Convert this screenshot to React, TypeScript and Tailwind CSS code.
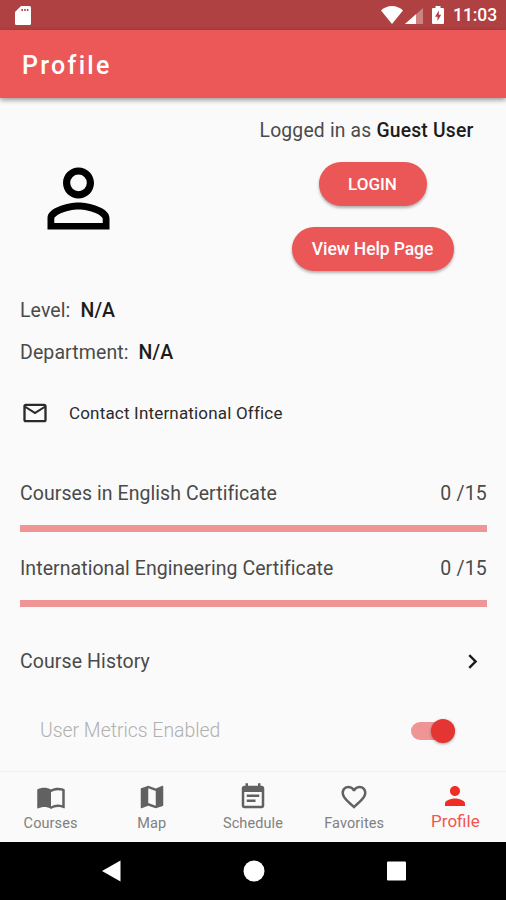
import React from "react";
import clsx from "clsx";

interface IconProps {
  path: string;
  className?: string;
}

const Icon: React.FC<IconProps> = ({ path, className }) => (
  <svg viewBox="0 0 24 24" fill="currentColor" className={clsx("shrink-0", className)}>
    <path d={path} />
  </svg>
);

const personOutline =
  "M12 5.800a2.150 2.150 0 1 1 0 4.300 2.150 2.150 0 0 1 0-4.300M12 14.850c3 0 6.250 1.500 6.250 2.400v1.100H5.750v-1.100c0-.9 3.250-2.400 6.250-2.400M12 4C9.790 4 8 5.790 8 8s1.790 4 4 4 4-1.790 4-4-1.790-4-4-4zm0 9c-2.670 0-8 1.340-8 4v3h16v-3c0-2.660-5.330-4-8-4z";
const mailOutline =
  "M22 6c0-1.1-.9-2-2-2H4c-1.1 0-2 .9-2 2v12c0 1.1.9 2 2 2h16c1.1 0 2-.9 2-2V6zm-2 0l-8 5-8-5h16zm0 12H4V8l8 5 8-5v10z";
const chevronRight = "M10 6L8.59 7.41 13.17 12l-4.58 4.59L10 18l6-6z";

const tabs = [
  {
    label: "Courses",
    path: "M21 5c-1.11-.35-2.33-.5-3.5-.5-1.95 0-4.05.4-5.5 1.5-1.45-1.1-3.55-1.5-5.5-1.5S2.45 4.9 1 6v14.65c0 .25.25.5.5.5.1 0 .15-.05.25-.05C3.1 20.45 5.05 20 6.5 20c1.95 0 4.05.4 5.5 1.5 1.35-.85 3.8-1.5 5.5-1.5 1.65 0 3.35.3 4.75 1.05.1.05.15.05.25.05.25 0 .5-.25.5-.5V6c-.6-.45-1.25-.75-2-1zm0 13.5c-1.1-.35-2.3-.5-3.5-.5-1.7 0-4.15.65-5.5 1.5V8c1.35-.85 3.8-1.5 5.5-1.5 1.2 0 2.4.15 3.5.5v11.5z",
  },
  {
    label: "Map",
    path: "M20.5 3l-.16.03L15 5.1 9 3 3.36 4.9c-.21.07-.36.25-.36.48V20.5c0 .28.22.5.5.5l.16-.03L9 18.9l6 2.1 5.64-1.9c.21-.07.36-.25.36-.48V3.5c0-.28-.22-.5-.5-.5zM15 19l-6-2.11V5l6 2.11V19z",
  },
  {
    label: "Schedule",
    path: "M17 10H7v2h10v-2zm2-7h-1V1h-2v2H8V1H6v2H5c-1.11 0-1.99.9-1.99 2L3 19c0 1.1.89 2 2 2h14c1.1 0 2-.9 2-2V5c0-1.1-.9-2-2-2zm0 16H5V8h14v11zm-5-5H7v2h7v-2z",
  },
  {
    label: "Favorites",
    path: "M16.5 3c-1.74 0-3.41.81-4.5 2.09C10.91 3.81 9.24 3 7.5 3 4.42 3 2 5.42 2 8.5c0 3.78 3.4 6.86 8.55 11.54L12 21.35l1.45-1.32C18.6 15.36 22 12.28 22 8.5 22 5.42 19.58 3 16.5 3zm-4.4 15.55l-.1.1-.1-.1C7.14 14.24 4 11.39 4 8.5 4 6.5 5.5 5 7.5 5c1.54 0 3.04.99 3.57 2.36h1.87C13.46 5.99 14.96 5 16.5 5c2 0 3.5 1.5 3.5 3.5 0 2.89-3.14 5.74-7.9 10.05z",
  },
  {
    label: "Profile",
    path: "M12 12c2.21 0 4-1.79 4-4s-1.79-4-4-4-4 1.79-4 4 1.79 4 4 4zm0 2c-2.67 0-8 1.34-8 4v2h16v-2c0-2.66-5.33-4-8-4z",
    active: true,
  },
];

const StatusBar = () => (
  <div className="flex h-[30px] items-center bg-[#b04143] pl-[15px] pr-[9px] text-white">
    <svg viewBox="0 0 16 19" className="h-[19px] w-4" fill="currentColor">
      <path d="M6 0h8.500a1.500 1.500 0 0 1 1.500 1.500v16a1.500 1.500 0 0 1-1.500 1.500h-13A1.500 1.500 0 0 1 0 17.500V6z" />
      <path d="M6.500 3h1.500v2H6.500zM9.200 3h1.500v2H9.200zM11.900 3h1.500v2h-1.500z" fill="#b04143" />
    </svg>
    <div className="ml-auto flex items-center">
      <svg viewBox="0 0 22 18" className="h-[18px] w-[22px]" fill="currentColor">
        <path d="M11 18 0 4.500C3 1.500 7 0 11 0s8 1.500 11 4.500z" />
      </svg>
      <svg viewBox="0 0 18 16" className="ml-0.5 mt-px h-4 w-[18px]" fill="currentColor">
        <path d="M0 16 18 0v16z" opacity=".35" />
        <path d="M0 16 11 6.200V16z" />
      </svg>
      <svg viewBox="0 0 12 18" className="ml-[9px] h-[18px] w-3" fill="currentColor">
        <path d="M3.500 0h5v2H11a1 1 0 0 1 1 1v14a1 1 0 0 1-1 1H1a1 1 0 0 1-1-1V3a1 1 0 0 1 1-1h2.500z" />
        <path d="M6.800 4.500 3 10.800h2.500v4.200L9.200 8.800H6.800z" fill="#b04143" />
      </svg>
      <span className="ml-[9px] mt-0.5 text-[17.5px] font-medium leading-none tracking-[-0.1px]">
        11:03
      </span>
    </div>
  </div>
);

interface PillProps {
  children: React.ReactNode;
  className?: string;
}

const Pill: React.FC<PillProps> = ({ children, className }) => (
  <button
    className={clsx(
      "h-11 rounded-full bg-[#eb5657] font-medium text-white",
      "shadow-[0_2px_3px_rgba(0,0,0,0.3)]",
      className
    )}
  >
    {children}
  </button>
);

const Certificate = ({ name }: { name: string }) => (
  <div className="h-[75px]">
    <div className="flex h-6 items-center justify-between tracking-[0.06px]">
      <span>{name}</span>
      <span className="tracking-[0.2px]">0 /15</span>
    </div>
    <div className="mt-[19px] h-[7px] bg-[#ef9595]" />
  </div>
);

const App = () => {
  return (
    <div
      className="flex h-[900px] w-[506px] flex-col overflow-hidden bg-[#fafafa] text-[19.5px] leading-6 text-[#4a4a4a]"
      style={{ fontFamily: 'Roboto, "Liberation Sans", sans-serif' }}
    >
      <StatusBar />
      <header className="flex h-[68px] shrink-0 items-center bg-[#ec5858] pl-[22px] pt-1 text-white shadow-[0_2px_5px_rgba(0,0,0,0.4)]">
        <h1 className="text-[25px] font-medium tracking-[2.3px]">Profile</h1>
      </header>

      <main className="flex flex-1 flex-col pl-5 pr-[19px]">
        <section className="flex h-[201px] pt-[21px]">
          <div className="w-[220px] pl-3 pt-[33px]">
            <Icon path={personOutline} className="size-[93px] text-black" />
          </div>
          <div className="flex flex-1 flex-col items-center pl-[18px]">
            <p className="whitespace-nowrap pr-3 text-[19.3px] tracking-[0.2px]">
              Logged in as <b className="font-medium text-[#1c1c1c]">Guest User</b>
            </p>
            <Pill className="mt-[19px] w-[108px] text-[17px]">LOGIN</Pill>
            <Pill className="mt-[21px] w-[162px] text-[17.5px] tracking-[-0.1px]">
              View Help Page
            </Pill>
          </div>
        </section>

        <p className="tracking-[0.1px]">
          Level:<b className="ml-2.5 font-medium text-[#1c1c1c]">N/A</b>
        </p>
        <p className="mt-[18px] tracking-[0.1px]">
          Department:<b className="ml-2.5 font-medium text-[#1c1c1c]">N/A</b>
        </p>

        <div className="mt-[33px] flex h-[30px] items-center text-[17px] tracking-[0.18px] text-[#2a2a2a]">
          <Icon path={mailOutline} className="ml-px size-7" />
          <span className="ml-5">Contact International Office</span>
        </div>

        <div className="mt-[54px]">
          <Certificate name="Courses in English Certificate" />
          <Certificate name="International Engineering Certificate" />
        </div>

        <div className="mt-3.5 flex h-[30px] items-center justify-between tracking-[0.1px]">
          <span className="pt-0.5">Course History</span>
          <Icon path={chevronRight} className="size-[29px] text-[#1c1c1c]" />
        </div>

        <div className="mt-[41px] flex h-7 items-center justify-between pl-5 pr-8">
          <span className="text-[19.4px] font-light text-[#b0b0b0]">User Metrics Enabled</span>
          <div className="flex h-[18px] w-11 items-center justify-end rounded-full bg-[#ef9595]">
            <div className="size-6 shrink-0 rounded-full bg-[#e53533] shadow-[0_1px_3px_rgba(0,0,0,0.35)]" />
          </div>
        </div>
      </main>

      <nav className="grid h-[71px] shrink-0 grid-cols-5 border-t border-[#f0f0f0]">
        {tabs.map((tab) => (
          <div
            key={tab.label}
            className={clsx(
              "flex flex-col items-center",
              tab.active ? "pt-[9px] text-[#f2554f]" : "pt-2.5 text-[#808080]"
            )}
          >
            <Icon
              path={tab.path}
              className={clsx("size-[30px]", tab.active ? "text-[#f12c22]" : "text-[#616161]")}
            />
            <span
              className={clsx(
                tab.active
                  ? "text-[17px] leading-5"
                  : "mt-1 text-[14.5px] leading-4 tracking-[0.1px]"
              )}
            >
              {tab.label}
            </span>
          </div>
        ))}
      </nav>

      <footer className="flex h-[58px] shrink-0 items-center justify-center bg-black pl-px text-white">
        <svg viewBox="0 0 304 24" className="h-6 w-[304px]" fill="currentColor">
          <path d="M0 12 18.500 1.500v21z" />
          <circle cx="152" cy="12" r="10.500" />
          <rect x="285" y="2.500" width="19" height="19" rx="1" />
        </svg>
      </footer>
    </div>
  );
};

export default App;
